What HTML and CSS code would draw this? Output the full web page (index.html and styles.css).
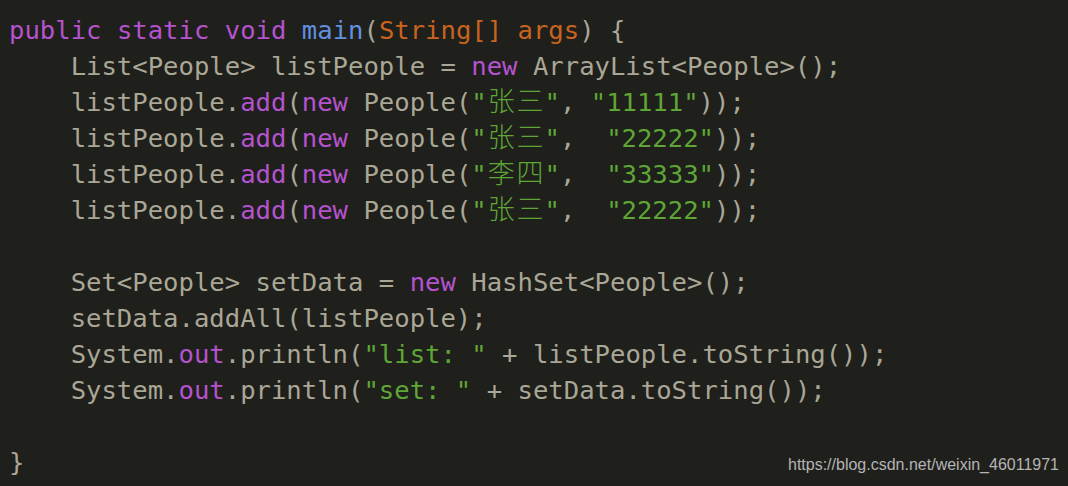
FILE: index.html
```html
<!DOCTYPE html>
<html>
<head>
<meta charset="utf-8">
<link rel="stylesheet" href="styles.css">
</head>
<body>
<div class="code">
<div class="line"><span class="kw">public</span> <span class="kw">static</span> <span class="kw">void</span> <span class="fn">main</span>(<span class="param">String[] args</span>) {</div>
<div class="line">    List&lt;People&gt; listPeople = <span class="kw">new</span> ArrayList&lt;People&gt;();</div>
<div class="line">    listPeople.<span class="kw">add</span>(<span class="kw">new</span> People(<span class="str">"<span class="cjk">张</span><span class="cjk">三</span>"</span>, <span class="str">"11111"</span>));</div>
<div class="line">    listPeople.<span class="kw">add</span>(<span class="kw">new</span> People(<span class="str">"<span class="cjk">张</span><span class="cjk">三</span>"</span>,  <span class="str">"22222"</span>));</div>
<div class="line">    listPeople.<span class="kw">add</span>(<span class="kw">new</span> People(<span class="str">"<span class="cjk">李</span><span class="cjk">四</span>"</span>,  <span class="str">"33333"</span>));</div>
<div class="line">    listPeople.<span class="kw">add</span>(<span class="kw">new</span> People(<span class="str">"<span class="cjk">张</span><span class="cjk">三</span>"</span>,  <span class="str">"22222"</span>));</div>
<div class="line"> </div>
<div class="line">    Set&lt;People&gt; setData = <span class="kw">new</span> HashSet&lt;People&gt;();</div>
<div class="line">    setData.addAll(listPeople);</div>
<div class="line">    System.<span class="kw">out</span>.println(<span class="str">"list: "</span> + listPeople.toString());</div>
<div class="line">    System.<span class="kw">out</span>.println(<span class="str">"set: "</span> + setData.toString());</div>
<div class="line"> </div>
<div class="line last"><span>}</span><span class="mark">https://blog.csdn.net/weixin_46011971</span></div>
</div>
</body>
</html>
```

FILE: styles.css
```css
html, body {
  margin: 0;
  padding: 0;
  background: #1f1f1c;
  width: 1068px;
  height: 486px;
  overflow: hidden;
}

.code {
  padding: 12px 0 0 9px;
  font-family: "DejaVu Sans Mono", "Liberation Mono", monospace;
  font-size: 25.6px;
  line-height: 36px;
  color: #aaa796;
}

.line {
  white-space: pre;
  height: 36px;
}

.kw { color: #b553cf; }
.fn { color: #6190e0; }
.param { color: #c8641f; }
.str { color: #5ea635; }

.cjk {
  display: inline-block;
  width: 2ch;
  text-align: center;
  font-family: "Noto Sans CJK SC", sans-serif;
  font-size: 27px;
  font-weight: 300;
  line-height: 20px;
}

.last {
  display: flex;
  justify-content: space-between;
  align-items: baseline;
  padding-right: 9px;
}

.mark {
  font-family: "Liberation Sans", Arial, sans-serif;
  font-size: 16px;
  line-height: 20px;
  color: #b4b4b4;
  position: relative;
  top: -1px;
}
```
